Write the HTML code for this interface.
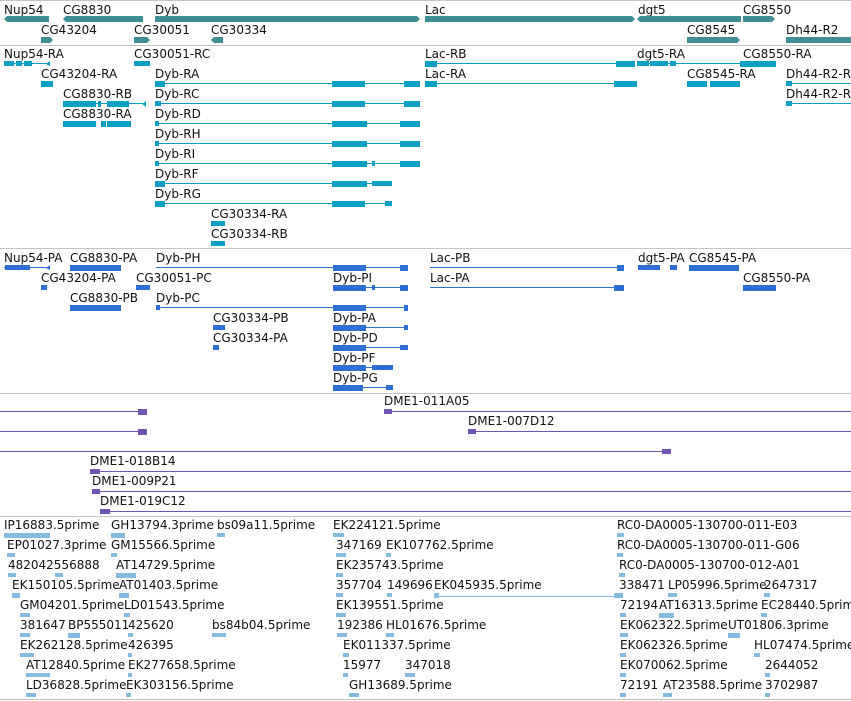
<!DOCTYPE html>
<html><head><meta charset="utf-8"><style>
html,body{margin:0;padding:0;background:#fff;width:851px;height:701px;overflow:hidden}
svg{display:block}
text{font-family:"DejaVu Sans","Liberation Sans",sans-serif;font-size:12px;fill:#111}
</style></head><body>
<svg width="851" height="701" viewBox="0 0 851 701" xmlns="http://www.w3.org/2000/svg">
<g fill="#c4c4c4">
<rect x="0" y="0" width="851" height="1"/><rect x="0" y="45" width="851" height="1"/>
<rect x="0" y="248" width="851" height="1"/><rect x="0" y="393" width="851" height="1"/>
<rect x="0" y="516" width="851" height="1"/><rect x="0" y="699" width="851" height="1"/>
</g>
<!-- genes -->
<text x="4" y="14">Nup54</text><text x="63" y="14">CG8830</text><text x="155" y="14">Dyb</text>
<text x="425" y="14">Lac</text><text x="638" y="14">dgt5</text><text x="743" y="14">CG8550</text>
<text x="41" y="34">CG43204</text><text x="134" y="34">CG30051</text><text x="211" y="34">CG30334</text>
<text x="687" y="34">CG8545</text><text x="786" y="34">Dh44-R2</text>
<g fill="#3f8e93">
<polygon points="4,19 7,16 49,16 49,22 7,22"/><polygon points="63,19 66,16 143,16 143,22 66,22"/>
<polygon points="155,16 417,16 420,19 417,22 155,22"/><rect x="425" y="16" width="6" height="6"/>
<polygon points="425,16 632,16 635,19 632,22 425,22"/><polygon points="637,19 640,16 741,16 741,22 640,22"/>
<polygon points="743,16 772,16 775,19 772,22 743,22"/>
<polygon points="41,37 50,37 53,40 50,43 41,43"/><polygon points="134,37 147,37 150,40 147,43 134,43"/>
<polygon points="211,40 214,37 223,37 223,43 214,43"/><polygon points="687,37 737,37 740,40 737,43 687,43"/>
<rect x="786" y="37" width="65" height="6"/>
</g>
<!-- transcripts -->
<g>
<text x="4" y="58">Nup54-RA</text><text x="134" y="58">CG30051-RC</text><text x="425" y="58">Lac-RB</text><text x="637" y="58">dgt5-RA</text><text x="743" y="58">CG8550-RA</text>
<text x="41" y="78">CG43204-RA</text><text x="155" y="78">Dyb-RA</text><text x="425" y="78">Lac-RA</text><text x="687" y="78">CG8545-RA</text><text x="786" y="78">Dh44-R2-R</text>
<text x="63" y="98">CG8830-RB</text><text x="155" y="98">Dyb-RC</text><text x="786" y="98">Dh44-R2-R</text>
<text x="63" y="118">CG8830-RA</text><text x="155" y="118">Dyb-RD</text>
<text x="155" y="138">Dyb-RH</text><text x="155" y="158">Dyb-RI</text><text x="155" y="178">Dyb-RF</text><text x="155" y="198">Dyb-RG</text>
<text x="211" y="218">CG30334-RA</text><text x="211" y="238">CG30334-RB</text>
</g>
<g fill="#0aa0c4">
<rect x="4" y="63" width="46" height="1"/><rect x="4" y="61" width="10" height="5"/><rect x="16" y="61" width="6" height="5"/><rect x="24" y="61" width="8" height="5"/><polygon points="46,64 50,61 50,66"/>
<rect x="134" y="61" width="16" height="5"/>
<rect x="41" y="81" width="12" height="6"/>
<rect x="63" y="103" width="83" height="1"/><rect x="63" y="101" width="33" height="6"/><rect x="98" y="101" width="3" height="6"/><rect x="107" y="101" width="22" height="6"/><polygon points="142,104 146,101 146,107"/>
<rect x="63" y="121" width="33" height="6"/><rect x="101" y="121" width="5" height="6"/><rect x="107" y="121" width="24" height="6"/>
<rect x="211" y="221" width="14" height="5"/><rect x="211" y="241" width="14" height="5"/>
<rect x="425" y="63" width="210" height="1"/><rect x="425" y="61" width="12" height="6"/><rect x="616" y="61" width="19" height="6"/>
<rect x="637" y="63" width="103" height="1"/><rect x="637" y="61" width="12" height="5"/><rect x="650" y="61" width="18" height="5"/><rect x="670" y="61" width="6" height="5"/>
<rect x="740" y="61" width="36" height="6"/>
<rect x="425" y="83" width="212" height="1"/><rect x="425" y="81" width="12" height="6"/><rect x="614" y="81" width="23" height="6"/>
<rect x="687" y="81" width="20" height="6"/><rect x="710" y="81" width="30" height="6"/>
<rect x="786" y="83" width="65" height="1"/><rect x="786" y="81" width="6" height="5"/>
<rect x="786" y="103" width="65" height="1"/><rect x="786" y="101" width="6" height="5"/>
<!-- Dyb rows -->
<rect x="155" y="83" width="265" height="1"/><rect x="155" y="81" width="10" height="6"/><rect x="332" y="81" width="33" height="6"/><rect x="404" y="81" width="16" height="6"/>
<rect x="155" y="103" width="265" height="1"/><rect x="155" y="101" width="6" height="5"/><rect x="332" y="101" width="33" height="6"/><rect x="404" y="101" width="16" height="6"/>
<rect x="155" y="123" width="265" height="1"/><rect x="155" y="121" width="4" height="5"/><rect x="332" y="121" width="35" height="6"/><rect x="400" y="121" width="20" height="6"/>
<rect x="155" y="143" width="265" height="1"/><rect x="155" y="141" width="4" height="5"/><rect x="332" y="141" width="35" height="6"/><rect x="400" y="141" width="20" height="6"/>
<rect x="155" y="163" width="265" height="1"/><rect x="155" y="161" width="4" height="5"/><rect x="332" y="161" width="35" height="6"/><rect x="372" y="161" width="3" height="5"/><rect x="400" y="161" width="20" height="6"/>
<rect x="155" y="183" width="237" height="1"/><rect x="155" y="181" width="10" height="6"/><rect x="332" y="181" width="35" height="6"/><rect x="372" y="181" width="20" height="5"/>
<rect x="155" y="203" width="237" height="1"/><rect x="155" y="201" width="10" height="6"/><rect x="332" y="201" width="33" height="6"/><rect x="385" y="201" width="7" height="5"/>
</g>
<!-- proteins -->
<g>
<text x="4" y="262">Nup54-PA</text><text x="70" y="262">CG8830-PA</text><text x="156" y="262">Dyb-PH</text><text x="430" y="262">Lac-PB</text><text x="638" y="262">dgt5-PA</text><text x="689" y="262">CG8545-PA</text>
<text x="41" y="282">CG43204-PA</text><text x="136" y="282">CG30051-PC</text><text x="333" y="282">Dyb-PI</text><text x="430" y="282">Lac-PA</text><text x="743" y="282">CG8550-PA</text>
<text x="70" y="302">CG8830-PB</text><text x="156" y="302">Dyb-PC</text>
<text x="213" y="322">CG30334-PB</text><text x="333" y="322">Dyb-PA</text>
<text x="213" y="342">CG30334-PA</text><text x="333" y="342">Dyb-PD</text>
<text x="333" y="362">Dyb-PF</text><text x="333" y="382">Dyb-PG</text>
</g>
<g fill="#2e6fd4">
<rect x="4" y="267" width="46" height="1"/><rect x="5" y="265" width="25" height="5"/><polygon points="46,268 50,265 50,270"/>
<rect x="70" y="265" width="51" height="6"/>
<rect x="156" y="267" width="252" height="1"/><rect x="333" y="265" width="33" height="6"/><rect x="400" y="265" width="8" height="6"/>
<rect x="430" y="267" width="194" height="1"/><rect x="617" y="265" width="7" height="6"/>
<rect x="638" y="265" width="22" height="5"/><rect x="670" y="265" width="7" height="5"/><rect x="689" y="265" width="50" height="6"/>
<rect x="41" y="285" width="6" height="5"/><rect x="136" y="285" width="14" height="5"/>
<rect x="333" y="287" width="75" height="1"/><rect x="333" y="285" width="33" height="6"/><rect x="372" y="285" width="3" height="5"/><rect x="400" y="285" width="8" height="6"/>
<rect x="430" y="287" width="194" height="1"/><rect x="614" y="285" width="10" height="6"/>
<rect x="743" y="285" width="33" height="6"/>
<rect x="70" y="305" width="51" height="6"/>
<rect x="156" y="307" width="252" height="1"/><rect x="156" y="305" width="4" height="5"/><rect x="333" y="305" width="33" height="6"/><rect x="404" y="305" width="4" height="6"/>
<rect x="213" y="325" width="12" height="5"/><rect x="333" y="327" width="75" height="1"/><rect x="333" y="325" width="33" height="6"/><rect x="404" y="325" width="4" height="5"/>
<rect x="213" y="345" width="6" height="5"/><rect x="333" y="347" width="75" height="1"/><rect x="333" y="345" width="33" height="6"/><rect x="400" y="345" width="8" height="5"/>
<rect x="333" y="367" width="60" height="1"/><rect x="333" y="365" width="33" height="6"/><rect x="372" y="365" width="21" height="5"/>
<rect x="333" y="387" width="60" height="1"/><rect x="333" y="385" width="30" height="6"/><rect x="386" y="385" width="7" height="5"/>
</g>
<!-- clones -->
<g>
<text x="384" y="405">DME1-011A05</text><text x="468" y="425">DME1-007D12</text>
<text x="90" y="465">DME1-018B14</text><text x="92" y="485">DME1-009P21</text><text x="100" y="505">DME1-019C12</text>
</g>
<g fill="#6f55b0">
<rect x="0" y="411" width="145" height="1"/><rect x="138" y="409" width="9" height="6"/>
<rect x="384" y="411" width="467" height="1"/><rect x="384" y="409" width="8" height="5"/>
<rect x="0" y="431" width="145" height="1"/><rect x="138" y="429" width="9" height="6"/>
<rect x="468" y="431" width="383" height="1"/><rect x="468" y="429" width="8" height="5"/>
<rect x="0" y="451" width="670" height="1"/><rect x="662" y="449" width="9" height="5"/>
<rect x="90" y="471" width="761" height="1"/><rect x="90" y="469" width="10" height="5"/>
<rect x="92" y="491" width="759" height="1"/><rect x="92" y="489" width="8" height="5"/>
<rect x="100" y="511" width="751" height="1"/><rect x="100" y="509" width="10" height="5"/>
</g>
<!-- ESTs -->
<g>
<text x="4" y="529">IP16883.5prime</text><text x="111" y="529">GH13794.3prime</text><text x="217" y="529">bs09a11.5prime</text><text x="333" y="529">EK224121.5prime</text><text x="617" y="529">RC0-DA0005-130700-011-E03</text>
<text x="7" y="549">EP01027.3prime</text><text x="111" y="549">GM15566.5prime</text><text x="336" y="549">347169</text><text x="386" y="549">EK107762.5prime</text><text x="617" y="549">RC0-DA0005-130700-011-G06</text>
<text x="8" y="569">482042556888</text><text x="116" y="569">AT14729.5prime</text><text x="336" y="569">EK235743.5prime</text><text x="619" y="569">RC0-DA0005-130700-012-A01</text>
<text x="12" y="589">EK150105.5prime</text><text x="119" y="589">AT01403.5prime</text><text x="336" y="589">357704</text><text x="387" y="589">149696</text><text x="434" y="589">EK045935.5prime</text><text x="619" y="589">338471</text><text x="668" y="589">LP05996.5prime</text><text x="764" y="589">2647317</text>
<text x="20" y="609">GM04201.5prime</text><text x="124" y="609">LD01543.5prime</text><text x="336" y="609">EK139551.5prime</text><text x="620" y="609">72194</text><text x="659" y="609">AT16313.5prime</text><text x="761" y="609">EC28440.5prime</text>
<text x="20" y="629">381647</text><text x="68" y="629">BP555011</text><text x="128" y="629">425620</text><text x="212" y="629">bs84b04.5prime</text><text x="337" y="629">192386</text><text x="386" y="629">HL01676.5prime</text><text x="620" y="629">EK062322.5prime</text><text x="728" y="629">UT01806.3prime</text>
<text x="20" y="649">EK262128.5prime</text><text x="128" y="649">426395</text><text x="343" y="649">EK011337.5prime</text><text x="620" y="649">EK062326.5prime</text><text x="754" y="649">HL07474.5prime</text>
<text x="26" y="669">AT12840.5prime</text><text x="128" y="669">EK277658.5prime</text><text x="343" y="669">15977</text><text x="405" y="669">347018</text><text x="620" y="669">EK070062.5prime</text><text x="765" y="669">2644052</text>
<text x="26" y="689">LD36828.5prime</text><text x="126" y="689">EK303156.5prime</text><text x="349" y="689">GH13689.5prime</text><text x="620" y="689">72191</text><text x="663" y="689">AT23588.5prime</text><text x="765" y="689">3702987</text>
</g>
<g fill="#86bbe0">
<rect x="4" y="533" width="46" height="5"/><rect x="15" y="535" width="20" height="1"/><rect x="111" y="533" width="14" height="5"/><rect x="217" y="533" width="8" height="4"/><rect x="333" y="533" width="11" height="4"/><rect x="617" y="533" width="7" height="4"/>
<rect x="7" y="553" width="8" height="4"/><rect x="111" y="553" width="6" height="4"/><rect x="336" y="553" width="10" height="4"/><rect x="386" y="553" width="5" height="4"/><rect x="617" y="553" width="6" height="4"/>
<rect x="8" y="573" width="8" height="4"/><rect x="55" y="573" width="8" height="4"/><rect x="116" y="573" width="20" height="5"/><rect x="336" y="573" width="7" height="4"/><rect x="619" y="573" width="6" height="4"/>
<rect x="12" y="593" width="8" height="5"/><rect x="119" y="593" width="10" height="5"/><rect x="336" y="593" width="7" height="4"/><rect x="387" y="593" width="5" height="4"/><rect x="434" y="593" width="5" height="5"/><rect x="434" y="596" width="186" height="1"/><rect x="614" y="593" width="9" height="5"/><rect x="668" y="593" width="9" height="4"/><rect x="764" y="593" width="6" height="4"/>
<rect x="20" y="613" width="10" height="4"/><rect x="124" y="613" width="6" height="4"/><rect x="336" y="613" width="10" height="4"/><rect x="620" y="613" width="6" height="4"/><rect x="659" y="613" width="15" height="5"/><rect x="761" y="613" width="6" height="4"/>
<rect x="20" y="633" width="10" height="4"/><rect x="68" y="633" width="12" height="5"/><rect x="128" y="633" width="5" height="4"/><rect x="212" y="633" width="14" height="4"/><rect x="337" y="633" width="10" height="4"/><rect x="386" y="633" width="8" height="4"/><rect x="620" y="633" width="8" height="4"/><rect x="728" y="633" width="12" height="5"/>
<rect x="20" y="653" width="14" height="4"/><rect x="128" y="653" width="4" height="4"/><rect x="343" y="653" width="6" height="4"/><rect x="620" y="653" width="6" height="4"/><rect x="754" y="653" width="6" height="4"/>
<rect x="26" y="673" width="24" height="4"/><rect x="128" y="673" width="4" height="4"/><rect x="343" y="673" width="5" height="4"/><rect x="405" y="673" width="10" height="4"/><rect x="620" y="673" width="6" height="4"/><rect x="765" y="673" width="5" height="4"/>
<rect x="26" y="693" width="10" height="4"/><rect x="126" y="693" width="5" height="4"/><rect x="349" y="693" width="10" height="4"/><rect x="620" y="693" width="6" height="4"/><rect x="663" y="693" width="9" height="4"/><rect x="765" y="693" width="5" height="4"/>
</g>
</svg>
</body></html>
